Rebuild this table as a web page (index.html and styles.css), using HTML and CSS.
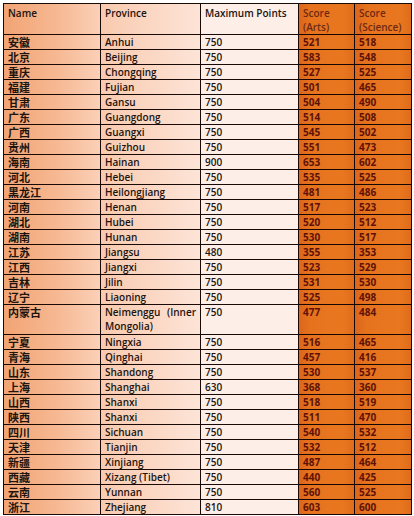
FILE: index.html
```html
<!DOCTYPE html>
<html lang="zh">
<head>
<meta charset="utf-8">
<link rel="stylesheet" href="styles.css">
</head>
<body>
<table class="scores">
  <colgroup>
    <col class="c-name"><col class="c-prov"><col class="c-max"><col class="c-arts"><col class="c-sci">
  </colgroup>
  <thead>
    <tr>
      <th class="name">Name</th>
      <th class="prov">Province</th>
      <th class="max">Maximum Points</th>
      <th class="score">Score<br>(Arts)</th>
      <th class="score">Score<br>(Science)</th>
    </tr>
  </thead>
  <tbody>
    <tr><td class="name">安徽</td><td class="prov">Anhui</td><td class="max">750</td><td class="score">521</td><td class="score">518</td></tr>
    <tr><td class="name">北京</td><td class="prov">Beijing</td><td class="max">750</td><td class="score">583</td><td class="score">548</td></tr>
    <tr><td class="name">重庆</td><td class="prov">Chongqing</td><td class="max">750</td><td class="score">527</td><td class="score">525</td></tr>
    <tr><td class="name">福建</td><td class="prov">Fujian</td><td class="max">750</td><td class="score">501</td><td class="score">465</td></tr>
    <tr><td class="name">甘肃</td><td class="prov">Gansu</td><td class="max">750</td><td class="score">504</td><td class="score">490</td></tr>
    <tr><td class="name">广东</td><td class="prov">Guangdong</td><td class="max">750</td><td class="score">514</td><td class="score">508</td></tr>
    <tr><td class="name">广西</td><td class="prov">Guangxi</td><td class="max">750</td><td class="score">545</td><td class="score">502</td></tr>
    <tr><td class="name">贵州</td><td class="prov">Guizhou</td><td class="max">750</td><td class="score">551</td><td class="score">473</td></tr>
    <tr><td class="name">海南</td><td class="prov">Hainan</td><td class="max">900</td><td class="score">653</td><td class="score">602</td></tr>
    <tr><td class="name">河北</td><td class="prov">Hebei</td><td class="max">750</td><td class="score">535</td><td class="score">525</td></tr>
    <tr><td class="name">黑龙江</td><td class="prov">Heilongjiang</td><td class="max">750</td><td class="score">481</td><td class="score">486</td></tr>
    <tr><td class="name">河南</td><td class="prov">Henan</td><td class="max">750</td><td class="score">517</td><td class="score">523</td></tr>
    <tr><td class="name">湖北</td><td class="prov">Hubei</td><td class="max">750</td><td class="score">520</td><td class="score">512</td></tr>
    <tr><td class="name">湖南</td><td class="prov">Hunan</td><td class="max">750</td><td class="score">530</td><td class="score">517</td></tr>
    <tr><td class="name">江苏</td><td class="prov">Jiangsu</td><td class="max">480</td><td class="score">355</td><td class="score">353</td></tr>
    <tr><td class="name">江西</td><td class="prov">Jiangxi</td><td class="max">750</td><td class="score">523</td><td class="score">529</td></tr>
    <tr><td class="name">吉林</td><td class="prov">Jilin</td><td class="max">750</td><td class="score">531</td><td class="score">530</td></tr>
    <tr><td class="name">辽宁</td><td class="prov">Liaoning</td><td class="max">750</td><td class="score">525</td><td class="score">498</td></tr>
    <tr class="tall"><td class="name">内蒙古</td><td class="prov"><span class="just"><span>Neimenggu</span><span>(Inner</span></span>Mongolia)</td><td class="max">750</td><td class="score">477</td><td class="score">484</td></tr>
    <tr><td class="name">宁夏</td><td class="prov">Ningxia</td><td class="max">750</td><td class="score">516</td><td class="score">465</td></tr>
    <tr><td class="name">青海</td><td class="prov">Qinghai</td><td class="max">750</td><td class="score">457</td><td class="score">416</td></tr>
    <tr><td class="name">山东</td><td class="prov">Shandong</td><td class="max">750</td><td class="score">530</td><td class="score">537</td></tr>
    <tr><td class="name">上海</td><td class="prov">Shanghai</td><td class="max">630</td><td class="score">368</td><td class="score">360</td></tr>
    <tr><td class="name">山西</td><td class="prov">Shanxi</td><td class="max">750</td><td class="score">518</td><td class="score">519</td></tr>
    <tr><td class="name">陕西</td><td class="prov">Shanxi</td><td class="max">750</td><td class="score">511</td><td class="score">470</td></tr>
    <tr><td class="name">四川</td><td class="prov">Sichuan</td><td class="max">750</td><td class="score">540</td><td class="score">532</td></tr>
    <tr><td class="name">天津</td><td class="prov">Tianjin</td><td class="max">750</td><td class="score">532</td><td class="score">512</td></tr>
    <tr><td class="name">新疆</td><td class="prov">Xinjiang</td><td class="max">750</td><td class="score">487</td><td class="score">464</td></tr>
    <tr><td class="name">西藏</td><td class="prov">Xizang (Tibet)</td><td class="max">750</td><td class="score">440</td><td class="score">425</td></tr>
    <tr><td class="name">云南</td><td class="prov">Yunnan</td><td class="max">750</td><td class="score">560</td><td class="score">525</td></tr>
    <tr><td class="name">浙江</td><td class="prov">Zhejiang</td><td class="max">810</td><td class="score">603</td><td class="score">600</td></tr>
  </tbody>
</table>
<p class="note">数据来源：教育考试院</p>
</body>
</html>
```

FILE: styles.css
```css
html, body {
  margin: 0;
  padding: 0;
  background: #ffffff;
}
body {
  padding: 3px 0 0 3px;
  font-family: "Open Sans", "Noto Sans CJK SC", sans-serif;
  color: #1c1410;
}
.scores {
  border-collapse: separate;
  border-spacing: 0;
  table-layout: fixed;
  width: 409px;
  font-size: 10px;
  font-weight: 600;
  border-top: 1px solid #1a0a05;
  border-left: 1px solid #1a0a05;
}
.c-name { width: 97px; }
.c-prov { width: 100px; }
.c-max { width: 98px; }
.c-arts { width: 56px; }
.c-sci { width: 57px; }

.scores th,
.scores td {
  border-right: 1px solid #1a0a05;
  border-bottom: 1px solid #1a0a05;
  padding: 0 4px;
  text-align: left;
  height: 14px;
  line-height: 14px;
  vertical-align: middle;
  white-space: nowrap;
}
.scores th {
  height: 26px;
  vertical-align: top;
  padding-top: 2px;
  font-weight: 600;
}
.scores .name {
  background: linear-gradient(to right, #f2a474, #f6b892 55%, #fbd0b8);
  font-family: "Noto Sans CJK SC", sans-serif;
  font-weight: 700;
  font-size: 11px;
  color: #20140e;
}
.scores th.name {
  font-family: "Open Sans", sans-serif;
  font-size: 10px;
  font-weight: 600;
}
.scores .prov {
  background: linear-gradient(to right, #f9caaf, #fde4d7);
}
.scores .max {
  background: #fdeee7;
}
.scores .score {
  background: linear-gradient(to right, #db661c, #e6721e 20%, #e9771f 80%, #e06c1c);
  color: #5e1206;
  font-weight: 700;
  border-color: #140603;
}
.scores th.score {
  color: #6e2a14;
  font-weight: 600;
}
.tall td {
  height: 29px;
  vertical-align: top;
}
.tall .prov {
  white-space: normal;
}
.just {
  display: flex;
  justify-content: space-between;
}
.note {
  margin: 1px 0 0 8px;
  font-family: "Noto Sans CJK SC", sans-serif;
  font-size: 11px;
  font-weight: 700;
  color: #111;
}
```
